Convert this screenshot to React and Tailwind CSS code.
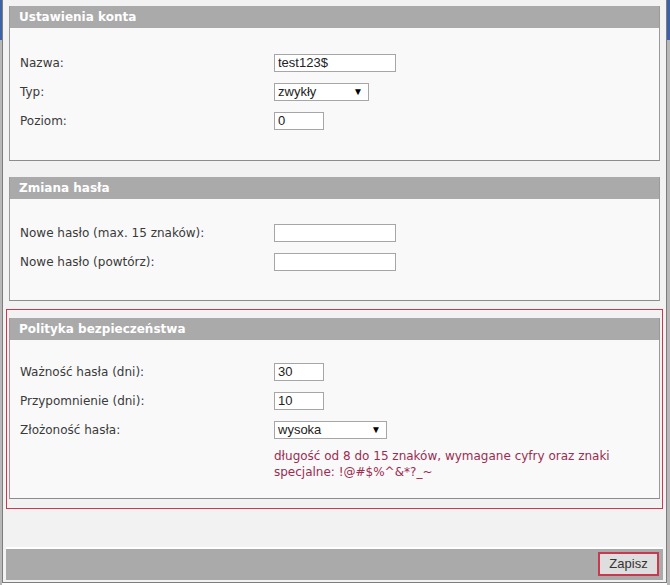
const label = "text-[12px] text-[#3a3a3a] [font-family:'DejaVu_Sans',Verdana,sans-serif]";
const field = "h-[18px] border border-[#a6a6a6] bg-white px-[3px] text-[13px] leading-[16px] text-[#222] [font-family:'Liberation_Sans',Arial,sans-serif]";

function Row({ name, children }) {
  return (
    <div className="flex h-[29px] items-center">
      <div className={`w-[254px] ${label}`}>{name}</div>
      {children}
    </div>
  );
}

function Input({ value = "", w }) {
  return <div className={`${field} ${w}`}>{value}</div>;
}

function Select({ value, w }) {
  return (
    <div className={`flex items-center justify-between ${field} ${w} pr-[5px]`}>
      <span>{value}</span>
      <span className="text-[10px] text-black">▼</span>
    </div>
  );
}

function Section({ title, body, children }) {
  return (
    <div className="border border-t-0 border-[#9a9a9a] border-b-[#8c8c8c] bg-[#f9f9f9]">
      <div className="h-[22px] bg-[#aaaaaa] pl-[9px] text-[12px] font-bold leading-[22px] text-white [font-family:'DejaVu_Sans',Verdana,sans-serif]">
        {title}
      </div>
      <div className={`pl-[10px] ${body}`}>{children}</div>
    </div>
  );
}

export default function App() {
  return (
    <div className="flex h-[585px] w-[670px] bg-white">
      <div className="flex w-[2px] flex-col">
        <div className="h-[40px] bg-[#3d62a8]" />
        <div className="flex-1 bg-[#b8b8b8]" />
      </div>
      <div className="flex h-[583px] w-[665px] flex-col border border-t-0 border-[#7d7d7d] bg-[#f2f2f2]">
        <div className="flex flex-col px-[3px] pt-[6px]">
          <div className="mx-[3px]">
            <Section title="Ustawienia konta" body="pt-[20px] pb-[25px]">
              <Row name="Nazwa:"><Input value="test123$" w="w-[122px]" /></Row>
              <Row name="Typ:"><Select value="zwykły" w="w-[95px]" /></Row>
              <Row name="Poziom:"><Input value="0" w="w-[50px]" /></Row>
            </Section>
          </div>
          <div className="mx-[3px] mt-[16px]">
            <Section title="Zmiana hasła" body="pt-[19px] pb-[24px]">
              <Row name="Nowe hasło (max. 15 znaków):"><Input w="w-[122px]" /></Row>
              <Row name="Nowe hasło (powtórz):"><Input w="w-[122px]" /></Row>
            </Section>
          </div>
          <div className="mt-[8px] border border-[#c8394f] px-[2px] pb-[9px] pt-[8px]">
            <Section title="Polityka bezpieczeństwa" body="pt-[17px] pb-[18px]">
              <Row name="Ważność hasła (dni):"><Input value="30" w="w-[50px]" /></Row>
              <Row name="Przypomnienie (dni):"><Input value="10" w="w-[50px]" /></Row>
              <Row name="Złożoność hasła:"><Select value="wysoka" w="w-[113px]" /></Row>
              <div className="flex pt-[4px]">
                <div className="w-[254px] shrink-0" />
                <p className="w-[370px] text-[12px] leading-[16px] text-[#9b2d52] [font-family:'DejaVu_Sans',Verdana,sans-serif]">
                  długość od 8 do 15 znaków, wymagane cyfry oraz znaki specjalne: !@#$%^&*?_~
                </p>
              </div>
            </Section>
          </div>
        </div>
        <div className="flex-1" />
        <div className="mx-[3px] flex h-[33px] items-center justify-end border-t-2 border-white bg-[#aaaaaa] pr-[4px]">
          <button className="mb-[2px] h-[24px] w-[61px] border-2 border-[#c8394f] bg-[#dedede] text-[13px] text-[#333] [font-family:'Liberation_Sans',Arial,sans-serif]">
            Zapisz
          </button>
        </div>
        <div className="h-[2px]" />
      </div>
      <div className="flex w-[3px] flex-col">
        <div className="h-[40px] bg-[#3d62a8]" />
        <div className="flex-1 bg-[#b8b8b8]" />
      </div>
    </div>
  );
}
